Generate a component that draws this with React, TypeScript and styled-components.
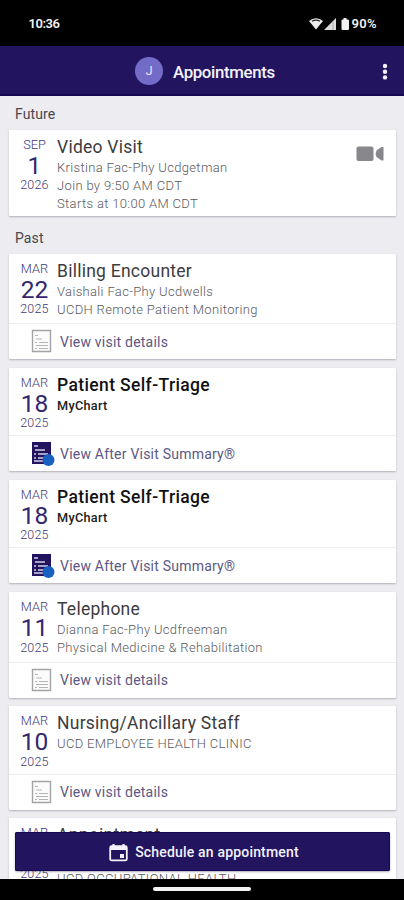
import React from "react";
import styled, { createGlobalStyle } from "styled-components";

const GlobalStyle = createGlobalStyle`
  * { box-sizing: border-box; }
  body { margin: 0; background: #000; font-family: Roboto, "Liberation Sans", sans-serif; }
`;

const Screen = styled.div`
  position: relative;
  width: 404px;
  height: 900px;
  overflow: hidden;
  display: flex;
  flex-direction: column;
  background: #000;
`;

const StatusBar = styled.div`
  flex: none;
  height: 46px;
  padding: 1px 27px 0 28.5px;
  display: flex;
  align-items: center;
  justify-content: space-between;
  color: #f2f2f2;
  font-size: 13px;
  font-weight: 600;
  letter-spacing: -0.45px;
`;

const StatusIcons = styled.div`
  display: flex;
  align-items: center;
  letter-spacing: 0.35px;
  svg { display: block; margin-right: 1px; }
`;

const Header = styled.header`
  flex: none;
  height: 50px;
  padding-left: 135px;
  padding-right: 15px;
  display: flex;
  align-items: center;
  background: #22145f;
  border-bottom: 2px solid #160653;
  color: #f4f3fa;
`;

const Avatar = styled.div`
  width: 28px;
  height: 28px;
  margin-top: 2px;
  border-radius: 50%;
  background: #726cc8;
  color: #e4e2fb;
  font-size: 13px;
  line-height: 28px;
  text-align: center;
`;

const HeaderTitle = styled.h1`
  margin: 3px 0 0 10px;
  font-size: 16.8px;
  line-height: 24px;
  font-weight: 500;
  letter-spacing: -0.33px;
`;

const MoreIcon = styled.svg`
  display: block;
  margin: 3px 0 0 auto;
`;

const Content = styled.main`
  flex: 1;
  min-height: 0;
  overflow: hidden;
  padding: 0 8px 0 9px;
  background: #ececf1;
`;

const SectionLabel = styled.h2<{ $height: number; $top: number }>`
  margin: 0;
  height: ${(p) => p.$height}px;
  padding: ${(p) => p.$top}px 0 0 6px;
  font-size: 14px;
  line-height: 18px;
  font-weight: 400;
  letter-spacing: 0.1px;
  color: #47474c;
`;

const CardStack = styled.div`
  display: flex;
  flex-direction: column;
  gap: 8.6px;
`;

const Card = styled.article`
  background: #fff;
  border-radius: 1px;
  box-shadow: 0 1px 2px rgba(40, 40, 55, 0.3);
`;

const Summary = styled.div<{ $height: number }>`
  height: ${(p) => p.$height}px;
  display: flex;
`;

const DateColumn = styled.div`
  width: 48px;
  padding: 6px 0 0 3px;
  display: flex;
  flex-direction: column;
  align-items: center;
  color: #433a78;
  font-size: 12.5px;
  line-height: 18px;
  font-weight: 300;
`;

const Month = styled.span`
  font-size: 12.8px;
`;

const Day = styled.strong`
  height: 22.5px;
  font-size: 24.5px;
  line-height: 23px;
  font-weight: 400;
  color: #33276f;
`;

const Year = styled.span`
  font-size: 12.5px;
  letter-spacing: 0.2px;
`;

const Details = styled.div`
  flex: 1;
  padding-top: 6px;
`;

const VisitTitle = styled.h3<{ $bold?: boolean }>`
  margin: 0;
  font-size: 17.5px;
  line-height: 22px;
  letter-spacing: ${(p) => (p.$bold ? 0.37 : 0.25)}px;
  font-weight: ${(p) => (p.$bold ? 500 : 400)};
  color: ${(p) => (p.$bold ? "#111114" : "#3c3c3e")};
`;

const Line = styled.p<{ $bold?: boolean; $drop?: boolean }>`
  margin: ${(p) => (p.$drop ? 4 : 0)}px 0 0;
  height: 18.4px;
  font-size: ${(p) => (p.$bold ? 12.7 : 13)}px;
  line-height: 20px;
  letter-spacing: ${(p) => (p.$bold ? 0.3 : 0.34)}px;
  font-weight: ${(p) => (p.$bold ? 500 : 300)};
  color: ${(p) => (p.$bold ? "#1d1d20" : "#59595c")};
`;

const VideoIcon = styled.svg`
  display: block;
  flex: none;
  margin: 16px 12px 0 0;
`;

const ActionRow = styled.div`
  height: 36px;
  padding-left: 22px;
  display: flex;
  align-items: center;
  border-top: 1px solid #ededf0;
  color: #5d5784;
  font-size: 14px;
  letter-spacing: 0.22px;
  svg { display: block; margin-right: 4px; }
`;

const ScheduleButton = styled.button`
  position: absolute;
  left: 15px;
  top: 832px;
  width: 375px;
  height: 39px;
  padding: 1px 0 0 3px;
  display: flex;
  align-items: center;
  justify-content: center;
  gap: 7px;
  border: 0;
  border-radius: 2px;
  background: #22145f;
  box-shadow: inset 0 0 0 1px #170852, 0 1px 2px rgba(20, 10, 60, 0.35);
  color: #f3f2fa;
  font: 500 14px Roboto, sans-serif;
  letter-spacing: 0.18px;
`;

const NavBar = styled.div`
  flex: none;
  height: 21px;
  display: flex;
  justify-content: center;
  padding-top: 8px;
`;

const HomeHandle = styled.div`
  width: 98px;
  height: 4px;
  border-radius: 2px;
  background: #f4f4f4;
`;

type Visit = {
  month: string;
  day: string;
  year: string;
  title: string;
  lines: string[];
  summary?: boolean;
  spaced?: boolean;
};

const future: Visit = {
  month: "SEP", day: "1", year: "2026", title: "Video Visit",
  lines: ["Kristina Fac-Phy Ucdgetman", "Join by 9:50 AM CDT", "Starts at 10:00 AM CDT"],
};

const past: Visit[] = [
  { month: "MAR", day: "22", year: "2025", title: "Billing Encounter", lines: ["Vaishali Fac-Phy Ucdwells", "UCDH Remote Patient Monitoring"] },
  { month: "MAR", day: "18", year: "2025", title: "Patient Self-Triage", lines: ["MyChart"], summary: true },
  { month: "MAR", day: "18", year: "2025", title: "Patient Self-Triage", lines: ["MyChart"], summary: true },
  { month: "MAR", day: "11", year: "2025", title: "Telephone", lines: ["Dianna Fac-Phy Ucdfreeman", "Physical Medicine & Rehabilitation"] },
  { month: "MAR", day: "10", year: "2025", title: "Nursing/Ancillary Staff", lines: ["UCD EMPLOYEE HEALTH CLINIC"] },
  { month: "MAR", day: "10", year: "2025", title: "Appointment", lines: ["Employee Health", "UCD OCCUPATIONAL HEALTH"], spaced: true },
];

function DocumentIcon({ filled }: { filled?: boolean }) {
  return filled ? (
    <svg width="25" height="25" viewBox="0 0 25 25">
      <path d="M1 1h19v22H1z" fill="#21135f" />
      <path d="M3 5h4M4 9h10M3 13h2M7 13h10M3 17h2M7 17h8M3 20h9" stroke="#d5d2e7" strokeWidth="1.4" />
      <circle cx="17.5" cy="19" r="6" fill="#1761c2" />
    </svg>
  ) : (
    <svg width="25" height="25" viewBox="0 0 25 25">
      <path d="M1.5 1.5h18v21h-18z" fill="#fbfbfb" stroke="#a3a3a5" strokeWidth="1.4" />
      <path d="M4 6.500h3M5 10h6M4 13.500h2M8 13.500h9M5 16.500h12M4 19.500h2M8 19.500h9" stroke="#b4b4b6" />
    </svg>
  );
}

function VisitCard({ visit, upcoming }: { visit: Visit; upcoming?: boolean }) {
  return (
    <Card>
      <Summary $height={upcoming ? 86.5 : visit.lines.length > 1 ? 69.6 : 67.6}>
        <DateColumn>
          <Month>{visit.month}</Month>
          <Day>{visit.day}</Day>
          <Year>{visit.year}</Year>
        </DateColumn>
        <Details>
          <VisitTitle $bold={visit.summary}>{visit.title}</VisitTitle>
          {visit.lines.map((line, i) => (
            <Line key={line} $bold={visit.summary} $drop={visit.spaced && i === 1}>{line}</Line>
          ))}
        </Details>
        {upcoming && (
          <VideoIcon width="28" height="16" viewBox="0 0 28 16">
            <rect x="0.500" y="0.500" width="17" height="14.500" rx="2" fill="#88888c" />
            <path d="M27.500 1v13.500h-2l-5-3.500q-1.800-3.200 0-6.500L25.500 1z" fill="#88888c" />
          </VideoIcon>
        )}
      </Summary>
      {!upcoming && (
        <ActionRow>
          <DocumentIcon filled={visit.summary} />
          {visit.summary ? "View After Visit Summary®" : "View visit details"}
        </ActionRow>
      )}
    </Card>
  );
}

export default function App() {
  return (
    <Screen>
      <GlobalStyle />
      <StatusBar>
        <span>10:36</span>
        <StatusIcons>
          <svg width="42" height="14" viewBox="0 0 42 14">
            <path d="M0 4Q7 -1.500 14 4L7 12.500z" fill="#eee" />
            <path d="M3 4.300Q7 2 11 4.300" fill="none" stroke="#222" strokeWidth="1.300" />
            <path d="M15 13L27 1v12z" fill="#ddd" />
            <path d="M24 4v9" stroke="#aaa" strokeWidth="1" />
            <path d="M34.500 1h3v1.500h1.500q1 0 1 1v8.500q0 1-1 1h-5.500q-1 0-1-1v-8.500q0-1 1-1h1z" fill="#f2f2f2" />
          </svg>
          <span>90%</span>
        </StatusIcons>
      </StatusBar>
      <Header>
        <Avatar>J</Avatar>
        <HeaderTitle>Appointments</HeaderTitle>
        <MoreIcon width="8" height="18" viewBox="0 0 8 18">
          <circle cx="4" cy="3" r="2.200" fill="#f4f3fa" />
          <circle cx="4" cy="8.700" r="2.200" fill="#f4f3fa" />
          <circle cx="4" cy="14.400" r="2.200" fill="#f4f3fa" />
        </MoreIcon>
      </Header>
      <Content>
        <SectionLabel $height={33.5} $top={9}>Future</SectionLabel>
        <VisitCard visit={future} upcoming />
        <SectionLabel $height={37.5} $top={13}>Past</SectionLabel>
        <CardStack>
          {past.map((visit, i) => <VisitCard key={i} visit={visit} />)}
        </CardStack>
      </Content>
      <NavBar><HomeHandle /></NavBar>
      <ScheduleButton>
        <svg width="19" height="19" viewBox="0 0 19 19">
          <path d="M4.500 1v4M14.500 1v4" stroke="#f3f2fa" strokeWidth="2.200" />
          <rect x="1.200" y="3.200" width="16.600" height="14.200" rx="1.500" fill="none" stroke="#f3f2fa" strokeWidth="1.800" />
          <path d="M1 3h17v4H1zM11 11h4v4h-4z" fill="#f3f2fa" />
        </svg>
        Schedule an appointment
      </ScheduleButton>
    </Screen>
  );
}
